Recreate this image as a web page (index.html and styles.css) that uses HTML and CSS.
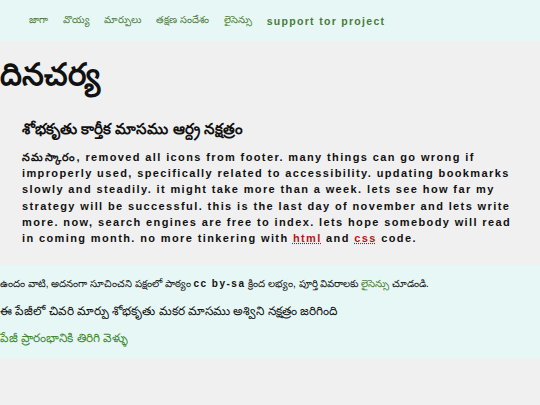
FILE: index.html
```html
<!DOCTYPE html>
<html lang="te">
<head>
<meta charset="utf-8">
<title>దినచర్య</title>
<link rel="stylesheet" href="styles.css">
</head>
<body>
<nav class="topnav">
  <a href="#">జాగా</a>
  <a href="#">వొయ్య</a>
  <a href="#">మార్పులు</a>
  <a href="#">తక్షణ సందేశం</a>
  <a href="#">లైసెన్సు</a>
  <a href="#" class="latin">support tor project</a>
</nav>
<main class="content">
  <h1 class="title">దినచర్య</h1>
  <article class="post">
    <h2 class="post-title">శోభకృతు కార్తీక మాసము ఆర్ద్ర నక్షత్రం</h2>
    <p class="post-body">నమస్కారం, removed all icons from footer. many things can go wrong if improperly used, specifically related to accessibility. updating bookmarks slowly and steadily. it might take more than a week. lets see how far my strategy will be successful. this is the last day of november and lets write more. now, search engines are free to index. lets hope somebody will read in coming month. no more tinkering with <abbr title="hypertext markup language">html</abbr> and <abbr title="cascading style sheets">css</abbr> code.</p>
  </article>
</main>
<footer class="footer">
  <p class="license">ఉందం వాటి, అదనంగా సూచించని పక్షంలో పాఠ్యం <span class="latin">cc by-sa</span> క్రింద లభ్యం, పూర్తి వివరాలకు <a href="#">లైసెన్సు</a> చూడండి.</p>
  <p class="modified">ఈ పేజీలో చివరి మార్పు శోభకృతు మకర మాసము అశ్విని నక్షత్రం జరిగింది</p>
  <p class="top"><a href="#">పేజీ ప్రారంభానికి తిరిగి వెళ్ళు</a></p>
</footer>
</body>
</html>
```

FILE: styles.css
```css
html, body {
  margin: 0;
  padding: 0;
}
body {
  background: #f0f0f0;
  color: #111;
  font-family: "Liberation Sans", "Noto Sans", sans-serif;
}
a {
  color: #4a7b3a;
  text-decoration: none;
}
.topnav {
  background: #e7f7f5;
  height: 41px;
  display: flex;
  align-items: center;
  gap: 15px;
  padding-left: 29px;
  font-size: 9.8px;
}
.topnav .latin {
  font-weight: bold;
  letter-spacing: 1.3px;
  font-size: 10.5px;
}
.content {
  padding: 10px 24px 19px 0;
}
.title {
  margin: 0;
  font-size: 31px;
  font-weight: bold;
  line-height: 48px;
}
.post {
  padding-left: 22px;
}
.post-title {
  margin: 21px 0 8px;
  font-size: 15px;
  font-weight: bold;
}
.post-body {
  margin: 0;
  font-size: 11px;
  font-weight: bold;
  letter-spacing: 1.38px;
  line-height: 16.2px;
}
abbr {
  color: #b0191a;
  text-decoration: underline dotted #b0191a;
}
.footer {
  background: #e7f7f5;
  padding: 10px 0 10px;
}
.footer p {
  margin: 0;
}
.license {
  font-size: 10px;
  line-height: 18px;
}
.license .latin {
  font-weight: bold;
  letter-spacing: 1.5px;
}
.modified {
  font-size: 12px;
  margin-top: 8px !important;
  line-height: 20px;
}
.top {
  font-size: 12px;
  margin-top: 7px !important;
  line-height: 20px;
}
.top a {
  color: #3e8a2e;
}
```
